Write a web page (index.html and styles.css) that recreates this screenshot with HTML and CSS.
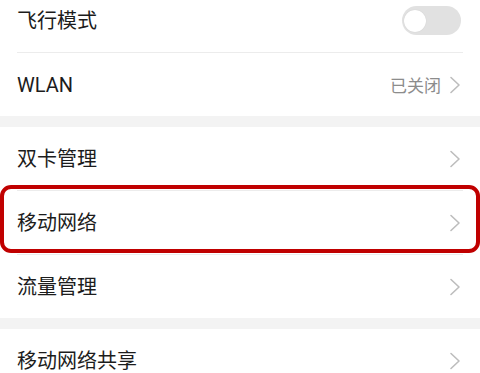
FILE: index.html
```html
<!DOCTYPE html>
<html lang="zh-CN">
<head>
<meta charset="utf-8">
<link rel="stylesheet" href="styles.css">
</head>
<body>
<div class="page">
  <section class="group first">
    <div class="row">
      <span class="label">飞行模式</span>
      <span class="toggle"><span class="knob"></span></span>
    </div>
    <div class="divider"></div>
    <div class="row">
      <span class="label latin">WLAN</span>
      <span class="right"><span class="value">已关闭</span><svg class="chev" viewBox="0 0 12 18" width="12" height="18"><path d="M2 1.5 L10 9 L2 16.5" fill="none" stroke="#bdbdbd" stroke-width="1.6" stroke-linecap="round" stroke-linejoin="round"/></svg></span>
    </div>
  </section>
  <div class="gap"></div>
  <section class="group">
    <div class="row">
      <span class="label">双卡管理</span>
      <span class="right"><svg class="chev" viewBox="0 0 12 18" width="12" height="18"><path d="M2 1.5 L10 9 L2 16.5" fill="none" stroke="#bdbdbd" stroke-width="1.6" stroke-linecap="round" stroke-linejoin="round"/></svg></span>
    </div>
    <div class="divider"></div>
    <div class="row highlighted">
      <span class="label">移动网络</span>
      <span class="right"><svg class="chev" viewBox="0 0 12 18" width="12" height="18"><path d="M2 1.5 L10 9 L2 16.5" fill="none" stroke="#bdbdbd" stroke-width="1.6" stroke-linecap="round" stroke-linejoin="round"/></svg></span>
      <span class="mark"></span>
    </div>
    <div class="divider"></div>
    <div class="row">
      <span class="label">流量管理</span>
      <span class="right"><svg class="chev" viewBox="0 0 12 18" width="12" height="18"><path d="M2 1.5 L10 9 L2 16.5" fill="none" stroke="#bdbdbd" stroke-width="1.6" stroke-linecap="round" stroke-linejoin="round"/></svg></span>
    </div>
  </section>
  <div class="gap"></div>
  <section class="group">
    <div class="row">
      <span class="label">移动网络共享</span>
      <span class="right"><svg class="chev" viewBox="0 0 12 18" width="12" height="18"><path d="M2 1.5 L10 9 L2 16.5" fill="none" stroke="#bdbdbd" stroke-width="1.6" stroke-linecap="round" stroke-linejoin="round"/></svg></span>
    </div>
  </section>
</div>
</body>
</html>
```

FILE: styles.css
```css
html, body {
  margin: 0;
  padding: 0;
  background: #ffffff;
  overflow: hidden;
}
body {
  width: 480px;
  height: 373px;
  font-family: Roboto, "Noto Sans CJK SC", sans-serif;
  color: #1c1c1c;
}
.page {
  margin-top: -11px;
}
.group {
  background: #ffffff;
}
.row {
  position: relative;
  height: 63px;
  display: flex;
  align-items: center;
  justify-content: space-between;
  padding: 0 19px 0 17px;
}
.label {
  font-size: 20px;
  line-height: 24px;
}
.divider {
  height: 1px;
  margin: 0 17px;
  background: #ececec;
}
.gap {
  height: 11px;
  background: #f3f3f3;
}
.right {
  display: flex;
  align-items: center;
  gap: 8px;
}
.value {
  font-size: 17px;
  color: #8c8c8c;
}
.chev {
  display: block;
}
.toggle {
  width: 59px;
  height: 29px;
  border-radius: 15px;
  background: #e1e1e1;
  display: flex;
  align-items: center;
  padding-left: 2px;
  box-sizing: border-box;
}
.knob {
  width: 22px;
  height: 22px;
  border-radius: 50%;
  background: #ffffff;
  box-shadow: 0 0 1px rgba(0,0,0,0.15);
}
.mark {
  position: absolute;
  left: 0;
  right: 0;
  top: -6px;
  height: 68px;
  border: 4px solid #c00000;
  border-radius: 11px;
  box-sizing: border-box;
}
```
